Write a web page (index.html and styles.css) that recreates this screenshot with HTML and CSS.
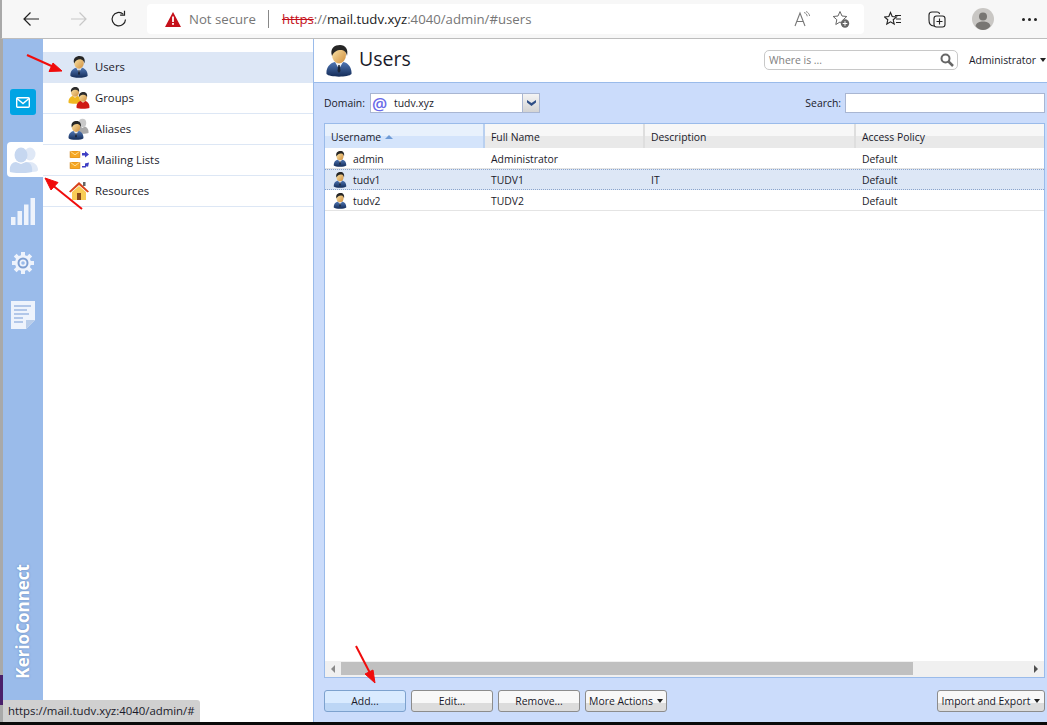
FILE: index.html
```html
<!DOCTYPE html>
<html lang="en">
  <head>
    <meta charset="UTF-8" />
    <title>Users - Kerio Connect</title>
    <link rel="stylesheet" href="styles.css">
  </head>
  <body>
    <svg class="defs" width="0" height="0">
      <defs>
        <linearGradient id="skin" x1="0" y1="0" x2="1" y2="1">
          <stop offset="0" stop-color="#fdeab0" />
          <stop offset="1" stop-color="#d08e3c" />
        </linearGradient>
        <linearGradient id="suit" x1="0" y1="0" x2="0" y2="1">
          <stop offset="0" stop-color="#4f76b4" />
          <stop offset="1" stop-color="#142c58" />
        </linearGradient>
        <symbol id="person" viewBox="0 0 26 32">
          <path d="M.5 29c-.5-6 3-11 8.500-12l4.500 3 4-3c5 1 8.500 6 8 12-3 3.500-22 3.500-25 0z" fill="url(#suit)" />
          <path d="M9 17l4 7 4-7-4 2z" fill="#f4f4f4" />
          <path d="M12.300 20h1.400l.8 6-1.500 2-1.500-2z" fill="#1c2638" />
          <ellipse cx="13" cy="10" rx="7" ry="8.500" fill="url(#skin)" />
          <path d="M6 11C3.500 3 9 0 14 0c5.500 0 8.500 4 7 11-.5-3-2-5.500-5-6-4-.5-8 1-10 6z" fill="#262626" />
        </symbol>
        <symbol id="person-red" viewBox="0 0 26 32">
          <path d="M1 30c-1-7 3-12 8-13l4 3 4-3c5 1 9 6 8 13-3 2-21 2-24 0z" fill="#cf1a12" />
          <ellipse cx="13" cy="10" rx="7.500" ry="8.500" fill="url(#skin)" />
          <path d="M5.500 10C4 3 9 0 14 0c5 0 8 4 6.500 10-1-3-3-5-6-5-4 0-7 1-9 5z" fill="#2c2c2c" />
        </symbol>
        <symbol id="person-yellow" viewBox="0 0 26 32">
          <path d="M1 30c-1-7 3-12 8-13l4 3 4-3c5 1 9 6 8 13-3 2-21 2-24 0z" fill="#f0b820" />
          <ellipse cx="13" cy="10" rx="7.500" ry="8.500" fill="url(#skin)" />
          <path d="M5.500 10C4 3 9 0 14 0c5 0 8 4 6.500 10-1-3-3-5-6-5-4 0-7 1-9 5z" fill="#2c2c2c" />
        </symbol>
        <symbol id="person-grey" viewBox="0 0 26 32">
          <path d="M1 30c-1-7 3-12 8-13l4 3 4-3c5 1 9 6 8 13-3 2-21 2-24 0z" fill="#a9a9a9" />
          <ellipse cx="13" cy="10" rx="7.500" ry="8.500" fill="#c9c9c9" />
        </symbol>
        <symbol id="envelope" viewBox="0 0 14 10">
          <rect x="0" y="0" width="14" height="10" rx="1" fill="#f7a823" stroke="#c9780e" stroke-width=".8" />
          <path d="M.5 .5L7 5.500 13.500 .5" fill="none" stroke="#fff2c4" stroke-width="1" />
        </symbol>
      </defs>
    </svg>

    <header class="toolbar">
      <svg class="tool back" width="18" height="16" viewBox="0 0 18 16"><path d="M17 8H2M8.500 1.500L2 8l6.500 6.500" fill="none" stroke="#222" stroke-width="1.200" /></svg>
      <svg class="tool forward" width="18" height="16" viewBox="0 0 18 16"><path d="M1 8h15M9.500 1.500L16 8l-6.500 6.500" fill="none" stroke="#c8c8c8" stroke-width="1.200" /></svg>
      <svg class="tool reload" width="18" height="18" viewBox="0 0 18 18"><path d="M15.500 9.500a6.700 6.700 0 1 1-2.300-5.400" fill="none" stroke="#222" stroke-width="1.200" /><path d="M14.500 .8v4.400h-4.400" fill="none" stroke="#222" stroke-width="1.200" /></svg>
      <div class="addressbar">
        <svg class="warn" width="16" height="15" viewBox="0 0 16 15"><path d="M8 0l8 15H0z" fill="#c5101a" /><rect x="7.100" y="4.500" width="1.800" height="5.500" fill="#fff" /><rect x="7.100" y="11" width="1.800" height="1.800" fill="#fff" /></svg>
        <span class="not-secure">Not secure</span>
        <span class="address-sep"></span>
        <span class="url"><s class="scheme">https</s><span class="dim">://</span>mail.tudv.xyz<span class="dim">:4040/admin/#users</span></span>
        <svg class="read-aloud" width="17" height="16" viewBox="0 0 17 16"><path d="M1 15L6 2l5 13M2.800 10.500h6.400" fill="none" stroke="#777" stroke-width="1.100" /><path d="M10 1.500c2 .5 3 2 3.200 3.800M12 .5c2 .8 3.400 2.500 3.600 4.500" fill="none" stroke="#888" stroke-width="1" /></svg>
        <svg class="fav-add" width="18" height="18" viewBox="0 0 18 18"><path d="M8 1.500l2 4.500 4.800.5-3.600 3.200 1 4.800L8 12l-4.200 2.500 1-4.800L1.200 6.500 6 6z" fill="none" stroke="#666" stroke-width="1" /><circle cx="13" cy="13.500" r="4.200" fill="#666" /><path d="M13 11.200v4.600M10.700 13.500h4.600" stroke="#fff" stroke-width="1" /></svg>
      </div>
      <svg class="tool favorites" width="17" height="16" viewBox="0 0 17 16"><path d="M6.500 1.500l1.700 4 4.300.4-3.300 2.900 1 4.200-3.700-2.200L2.800 13l1-4.200L.5 5.900l4.300-.4z" fill="none" stroke="#222" stroke-width="1.100" /><path d="M11 4.500h6M12 8h5M12 11.500h5" stroke="#222" stroke-width="1" /></svg>
      <svg class="tool collections" width="18" height="17" viewBox="0 0 18 17"><path d="M6 15C2 15 1 12 1 9V4c0-2 1-3 3-3h5c1.500 0 2.500 1 2.500 2" fill="none" stroke="#222" stroke-width="1.100" /><rect x="6" y="5" width="11" height="11" rx="2.500" fill="#f7f7f7" stroke="#222" stroke-width="1.100" /><path d="M11.500 7.500v6M8.500 10.500h6" stroke="#222" stroke-width="1.100" /></svg>
      <svg class="tool avatar" width="22" height="22" viewBox="0 0 22 22"><circle cx="11" cy="11" r="11" fill="#c9c7c4" /><circle cx="11" cy="8.500" r="4" fill="#787673" /><path d="M3.500 18c1-3.500 4-4.500 7.500-4.500s6.500 1 7.500 4.500c-2 2.500-4.500 4-7.500 4s-5.500-1.500-7.500-4z" fill="#787673" /></svg>
      <span class="tool dots"><i></i><i></i><i></i></span>
    </header>

    <div class="app">
      <aside class="rail">
        <div class="rail-mail">
          <svg width="14" height="11" viewBox="0 0 14 11"><rect x=".7" y=".7" width="12.600" height="9.600" rx="1" fill="none" stroke="#fff" stroke-width="1.400" /><path d="M1 1.500L7 6.500l6-5" fill="none" stroke="#fff" stroke-width="1.400" /></svg>
        </div>
        <div class="rail-active">
          <svg width="30" height="27" viewBox="0 0 30 27"><ellipse cx="21" cy="8" rx="5.500" ry="6.500" fill="#dfe8f6" /><path d="M14 26c0-7 3-10 7-10s8 3 8 8c0 1-2 2-6 2z" fill="#dfe8f6" /><ellipse cx="12" cy="9" rx="6.500" ry="7.500" fill="#c6d7f0" /><path d="M1 26c-1-6 2-10 6-10l5 2 5-2c4 0 7 4 6 10-3 1.500-19 1.500-22 0z" fill="#c6d7f0" /></svg>
        </div>
        <div class="rail-item chart">
          <svg width="24" height="27" viewBox="0 0 24 27"><g fill="#eef3fc"><rect x="0" y="19" width="4.500" height="8" /><rect x="6.500" y="13" width="4.500" height="14" /><rect x="13" y="6.500" width="4.500" height="20.500" /><rect x="19.500" y="0" width="4.500" height="27" /></g></svg>
        </div>
        <div class="rail-item gear">
          <svg width="24" height="24" viewBox="0 0 24 24"><g stroke="#eef3fc" stroke-width="4"><path d="M12 1v22M1 12h22M4.200 4.200l15.600 15.600M19.800 4.200L4.200 19.800" /></g><circle cx="12" cy="12" r="8" fill="#eef3fc" /><circle cx="12" cy="12" r="5.500" fill="#7e9fd2" /><circle cx="12" cy="12" r="3.500" fill="#eef3fc" /><circle cx="12" cy="12" r="1.800" fill="#9abbea" /></svg>
        </div>
        <div class="rail-item doc">
          <svg width="24" height="28" viewBox="0 0 24 28"><path d="M0 0h24v19l-9 9H0z" fill="#eef3fc" /><path d="M24 19l-9 9v-9z" fill="#b9cdea" /><g stroke="#9fb9e2" stroke-width="1.500"><path d="M3 5h17M3 9h13M3 13h15M3 17h9M3 21h9" /></g></svg>
        </div>
        <div class="brand">KerioConnect</div>
      </aside>

      <nav class="sidenav">
        <a class="nav-item selected"><svg class="nav-icon" width="19" height="22"><use href="#person" /></svg>Users</a>
        <a class="nav-item">
          <svg class="nav-icon" width="22" height="22" viewBox="0 0 22 22"><use href="#person-yellow" x="0" y="0" width="14" height="17" /><use href="#person-red" x="8" y="5" width="14" height="17" /></svg>Groups</a>
        <a class="nav-item">
          <svg class="nav-icon" width="22" height="22" viewBox="0 0 22 22"><use href="#person-grey" x="8" y="0" width="13" height="16" /><use href="#person" x="0" y="3" width="16" height="19" /></svg>Aliases</a>
        <a class="nav-item">
          <svg class="nav-icon" width="22" height="22" viewBox="0 0 22 22"><use href="#envelope" x="0" y="2" width="14" height="7" /><use href="#envelope" x="0" y="13" width="14" height="7" /><path d="M14 4h3V2l4 3.500-4 3V6.500h-3zM14 17h3v-2.500l4-1-1 4.500-1.200-1-1 1.500H14z" fill="#3f3fc4" /></svg>Mailing Lists</a>
        <a class="nav-item">
          <svg class="nav-icon" width="20" height="20" viewBox="0 0 20 20"><path d="M10 1L0 10.500l1.500 1L10 4l8.500 7.500 1.500-1z" fill="#d8431a" /><path d="M3 11l7-6 7 6v8H3z" fill="#f8cc55" /><rect x="8" y="12" width="4" height="7" fill="#8a4a1a" /><rect x="14" y="1" width="2.500" height="4" fill="#666" /></svg>Resources</a>
      </nav>

      <main class="content">
        <div class="page-head">
          <svg class="page-icon" width="26" height="32"><use href="#person" /></svg>
          <h1>Users</h1>
          <div class="where-is">
            <span>Where is ...</span>
            <svg width="14" height="14" viewBox="0 0 14 14"><circle cx="5.500" cy="5.500" r="4" fill="none" stroke="#666" stroke-width="2" /><path d="M8.500 8.500l4.500 4.500" stroke="#666" stroke-width="2.500" /></svg>
          </div>
          <div class="admin-menu">Administrator<i class="caret"></i></div>
        </div>

        <div class="page-body">
          <div class="filter-row">
            <label class="domain-label">Domain:</label>
            <div class="domain-select">
              <span class="at">@</span>
              <span class="domain-name">tudv.xyz</span>
              <span class="domain-btn"><svg width="9" height="6" viewBox="0 0 9 6"><path d="M0 0l4.500 3L9 0v2.500L4.500 6 0 2.500z" fill="#2f4f86" /></svg></span>
            </div>
            <label class="search-label">Search:</label>
            <input class="search-input" type="text" />
          </div>

          <div class="grid">
            <div class="grid-row grid-head">
              <div class="col-user sorted">Username <i class="sort-up"></i></div>
              <div class="col-name">Full Name</div>
              <div class="col-desc">Description</div>
              <div class="col-policy">Access Policy</div>
            </div>
            <div class="grid-row">
              <div class="col-user"><svg class="row-icon" width="14" height="16"><use href="#person" /></svg>admin</div>
              <div class="col-name">Administrator</div>
              <div class="col-desc"></div>
              <div class="col-policy">Default</div>
            </div>
            <div class="grid-row active">
              <div class="col-user"><svg class="row-icon" width="14" height="16"><use href="#person" /></svg>tudv1</div>
              <div class="col-name">TUDV1</div>
              <div class="col-desc">IT</div>
              <div class="col-policy">Default</div>
            </div>
            <div class="grid-row">
              <div class="col-user"><svg class="row-icon" width="14" height="16"><use href="#person" /></svg>tudv2</div>
              <div class="col-name">TUDV2</div>
              <div class="col-desc"></div>
              <div class="col-policy">Default</div>
            </div>
            <div class="grid-fill"></div>
            <div class="hscroll">
              <i class="scroll-left"></i>
              <div class="scroll-track"><div class="scroll-thumb"></div></div>
              <i class="scroll-right"></i>
            </div>
          </div>

          <div class="actions">
            <button class="btn btn-hover">Add...</button>
            <button class="btn">Edit...</button>
            <button class="btn">Remove...</button>
            <button class="btn">More Actions<i class="caret"></i></button>
            <button class="btn btn-import">Import and Export<i class="caret"></i></button>
          </div>
        </div>
      </main>
    </div>

    <div class="status-tip">https://mail.tudv.xyz:4040/admin/#</div>
    <div class="purple-edge"></div>
    <div class="black-edge"></div>

    <!-- red annotation arrows -->
    <svg class="annotations" width="1047" height="725" viewBox="0 0 1047 725">
      <g fill="#f00c0c" stroke="#f00c0c">
        <path d="M27 55L56 68" stroke-width="2" />
        <path d="M62 71L49 71.500 53 63z" />
        <path d="M82 209L51 184" stroke-width="2" />
        <path d="M45 178L58 182.500 51 190z" />
        <path d="M356 646L371 675" stroke-width="2" />
        <path d="M375 683L365 674 373 670z" />
      </g>
    </svg>
  </body>
</html>
```

FILE: styles.css
```css
* {
  box-sizing: border-box;
}
html,
body {
  margin: 0;
  height: 725px;
  overflow: hidden;
}
body {
  position: relative;
  font-family: "Open Sans", "Liberation Sans", sans-serif;
  font-size: 10.400px;
  color: #1a1a2a;
  background: #fff;
  display: flex;
  flex-direction: column;
}
.defs {
  position: absolute;
}

/* browser chrome */
.toolbar {
  height: 39px;
  flex: none;
  display: flex;
  align-items: center;
  background: #f7f7f7;
  border-bottom: 1px solid #bdbdbd;
  border-left: 2px solid #a9a9a9;
  position: relative;
}
.tool {
  flex: none;
}
.back {
  margin-left: 20px;
}
.forward {
  margin-left: 30px;
}
.reload {
  margin-left: 22px;
}
.addressbar {
  width: 717px;
  height: 30px;
  margin-left: 19px;
  padding-left: 18px;
  background: #fff;
  border-radius: 4px;
  display: flex;
  align-items: center;
  font-size: 13.200px;
}
.not-secure {
  margin-left: 8px;
  color: #767676;
}
.address-sep {
  width: 1px;
  height: 18px;
  margin: 0 13px 0 12px;
  background: #888;
}
.url {
  color: #222;
}
.url .dim {
  color: #767676;
}
.scheme {
  color: #c5101a;
}
.read-aloud {
  margin-left: auto;
}
.fav-add {
  margin: 0 14px 0 21px;
}
.favorites {
  margin-left: 20px;
}
.collections {
  margin-left: 27px;
}
.avatar {
  margin-left: 26px;
}
.dots {
  margin-left: 28px;
  display: flex;
  gap: 3px;
}
.dots i {
  width: 3px;
  height: 3px;
  border-radius: 50%;
  background: #222;
}

/* app */
.app {
  flex: 1;
  min-height: 0;
  display: flex;
  border-left: 3px solid #a9a9a9;
}
.rail {
  width: 40px;
  flex: none;
  background: #9abbea;
  display: flex;
  flex-direction: column;
  align-items: center;
  padding-top: 50px;
}
.rail-mail {
  width: 26px;
  height: 26px;
  border-radius: 3px;
  background: #00a4e4;
  display: flex;
  align-items: center;
  justify-content: center;
}
.rail-active {
  align-self: flex-end;
  width: 36px;
  height: 35px;
  margin-top: 27px;
  background: #fff;
  border-radius: 4px 0 0 4px;
  display: flex;
  align-items: center;
  padding-left: 2px;
}
.rail-item {
  display: flex;
  justify-content: center;
}
.chart {
  margin-top: 21px;
}
.gear {
  margin-top: 26px;
}
.doc {
  margin-top: 26px;
}
.brand {
  margin-top: auto;
  margin-bottom: 46px;
  writing-mode: vertical-rl;
  transform: rotate(180deg);
  color: #fff;
  font-size: 17px;
  font-weight: 700;
  line-height: 20px;
  text-shadow: 0 0 2px #5d7fb5;
}
.sidenav {
  width: 271px;
  flex: none;
  padding-top: 13px;
  background: #fff;
  border-right: 1px solid #9abbea;
}
.nav-item {
  height: 31px;
  padding-left: 25px;
  padding-bottom: 1px;
  display: flex;
  align-items: center;
  font-size: 11.300px;
  border-bottom: 1px solid #dde7f5;
  position: relative;
}
.nav-item.selected {
  background: #dde7f6;
}
.nav-icon {
  width: 22px;
  margin-right: 5px;
  flex: none;
}

/* main pane */
.content {
  flex: 1;
  min-width: 0;
  display: flex;
  flex-direction: column;
}
.page-head {
  height: 44px;
  flex: none;
  display: flex;
  align-items: center;
  padding: 0 2px 0 12px;
  border-bottom: 1px solid #9abbea;
}
.page-head h1 {
  margin: 0 0 4px 7px;
  font-size: 19.500px;
  font-weight: 400;
}
.where-is {
  width: 194px;
  height: 20px;
  margin: -2px 11px 0 auto;
  padding: 0 3px 0 4px;
  border: 1px solid #c8c8c8;
  border-radius: 5px;
  display: flex;
  align-items: center;
  justify-content: space-between;
  color: #808080;
}
.admin-menu {
  width: 76px;
  flex: none;
  margin-top: -2px;
  white-space: nowrap;
}
.caret {
  display: inline-block;
  margin-left: 4px;
  vertical-align: 2px;
  border-left: 3px solid transparent;
  border-right: 3px solid transparent;
  border-top: 4px solid #222;
}
.page-body {
  flex: 1;
  min-height: 0;
  display: flex;
  flex-direction: column;
  padding: 10px 2px 13px 10px;
  background: #cbdcfb;
}
.filter-row {
  height: 20px;
  flex: none;
  display: flex;
  align-items: center;
}
.domain-label {
  width: 41px;
  flex: none;
}
.domain-select {
  width: 170px;
  height: 20px;
  margin-left: 5px;
  display: flex;
  align-items: center;
  background: #fff;
  border: 1px solid #a9b6d2;
}
.at {
  width: 23px;
  padding-left: 1px;
  font-size: 17px;
  line-height: 17px;
  font-weight: 600;
  color: #6a6ae8;
}
.domain-name {
  flex: 1;
}
.domain-btn {
  width: 17px;
  height: 18px;
  display: flex;
  align-items: center;
  justify-content: center;
  background: linear-gradient(#f4f4f4, #d4d4d4);
  border-left: 1px solid #a9b6d2;
}
.search-label {
  margin-left: auto;
  margin-right: 4px;
}
.search-input {
  width: 200px;
  height: 20px;
  padding: 0;
  background: #fff;
  border: 1px solid #a9b6d2;
}
.grid {
  flex: 1;
  min-height: 0;
  margin-top: 10px;
  display: flex;
  flex-direction: column;
  background: #fff;
  border: 1px solid #9abbea;
}
.grid-row {
  height: 21px;
  flex: none;
  display: flex;
  align-items: center;
  border-bottom: 1px solid #e4e4e4;
}
.grid-row > div {
  padding-left: 6px;
  padding-top: 1px;
  display: flex;
  align-items: center;
  height: 100%;
}
.col-user {
  width: 160px;
}
.col-name {
  width: 160px;
}
.col-desc {
  width: 211px;
}
.col-policy {
  flex: 1;
}
.grid-head {
  height: 24px;
  border-bottom: 0;
  background: linear-gradient(#f7f7f7 50%, #e9e9e9 50%);
}
.grid-head > div {
  border-right: 2px solid #dedede;
}
.grid-head > .col-policy {
  border-right: 0;
}
.grid-head .sorted {
  background: linear-gradient(#e8f1fc 50%, #d4e4fb 50%);
  border-right-color: #b9d0f0;
}
.sort-up {
  margin-left: 4px;
  border-left: 4px solid transparent;
  border-right: 4px solid transparent;
  border-bottom: 4px solid #6e9bd6;
}
.grid-row.active {
  background: #dde7f6;
  border-top: 1px dotted #8aa4cc;
  border-bottom: 1px dotted #8aa4cc;
}
.grid-row.active > div {
  padding-top: 0;
}
.row-icon {
  margin: 0 6px 0 2px;
  flex: none;
}
.grid-fill {
  flex: 1;
}
.hscroll {
  height: 16px;
  flex: none;
  display: flex;
  align-items: center;
  background: #f0f0f0;
}
.scroll-left,
.scroll-right {
  width: 16px;
  flex: none;
  display: flex;
  justify-content: center;
}
.scroll-left::before {
  content: "";
  border-top: 4px solid transparent;
  border-bottom: 4px solid transparent;
  border-right: 4px solid #8a8a8a;
}
.scroll-right::before {
  content: "";
  border-top: 4px solid transparent;
  border-bottom: 4px solid transparent;
  border-left: 4px solid #505050;
}
.scroll-track {
  flex: 1;
  height: 100%;
  padding-top: 1px;
}
.scroll-thumb {
  width: 572px;
  height: 13px;
  background: #c0c0c0;
}
.actions {
  flex: none;
  margin-top: 12px;
  display: flex;
  gap: 5px;
}
.btn {
  width: 82px;
  height: 22px;
  padding: 0;
  font: inherit;
  color: #1a1a2a;
  background: linear-gradient(#f8f8f8 60%, #dcdcdc 60%);
  border: 1px solid #8c8c8c;
  border-radius: 3px;
}
.btn-hover {
  background: linear-gradient(#d9ebff 60%, #bcd6f5 60%);
  border-color: #7da2ce;
}
.btn-import {
  width: 108px;
  margin-left: auto;
}

/* things on top of the page */
.status-tip {
  position: absolute;
  left: 3px;
  top: 700px;
  width: 197px;
  height: 22px;
  padding-left: 5px;
  line-height: 22px;
  font-size: 11.400px;
  white-space: nowrap;
  background: #d0d0d0;
  border-radius: 0 3px 0 0;
}
.purple-edge {
  position: absolute;
  left: 0;
  top: 675px;
  width: 3px;
  height: 30px;
  background: #4a1f6a;
}
.black-edge {
  position: absolute;
  left: 0;
  right: 0;
  bottom: 0;
  height: 3px;
  background: #0a0a0a;
}
.annotations {
  position: absolute;
  left: 0;
  top: 0;
  pointer-events: none;
}
```
